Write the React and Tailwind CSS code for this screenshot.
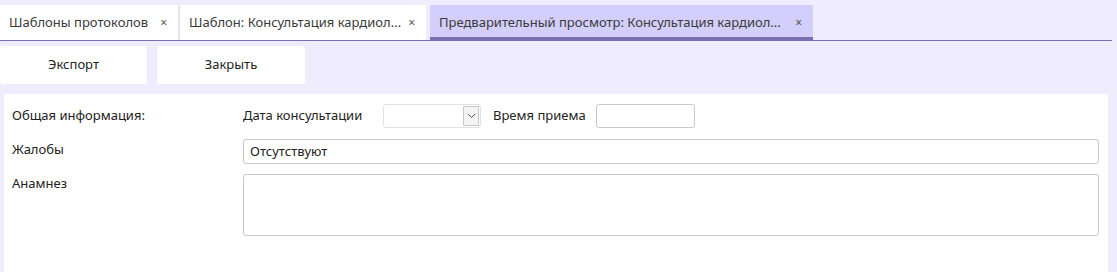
import React from 'react';

const tabs = [
  { title: 'Шаблоны протоколов', width: 'w-[178px]', active: false },
  { title: 'Шаблон: Консультация кардиол...', width: 'w-[246px]', active: false },
  { title: 'Предварительный просмотр: Консультация кардиол...', width: 'w-[383px]', active: true },
];

const Tab = ({ tab }) => (
  <div
    className={`${tab.width} h-[35px] flex items-center justify-between pl-[9px] pr-[11px] ${
      tab.active ? 'bg-[#d3cefb] border-b-[3px] border-[#7a6fb0] pt-[3px]' : 'bg-white'
    }`}
  >
    <span className="text-[13px] text-[#3a3a3a] whitespace-nowrap">{tab.title}</span>
    <span className="text-[12px] text-[#555] leading-none">×</span>
  </div>
);

export default function App() {
  return (
    <div
      className="w-[1117px] h-[272px] bg-[#eeecfd] overflow-hidden"
      style={{ fontFamily: '"Noto Sans", "Open Sans", sans-serif' }}
    >
      {/* Tabs */}
      <div className="pt-[5px] pr-[5px]">
        <div className="flex items-end border-b border-[#7a6fb0]">
          <Tab tab={tabs[0]} />
          <div className="w-[2px] h-[35px] bg-[#e4e4ea]" />
          <Tab tab={tabs[1]} />
          <div className="w-[4px]" />
          <Tab tab={tabs[2]} />
        </div>
      </div>

      {/* Toolbar */}
      <div className="flex gap-[10px] mt-[5px]">
        <button className="w-[147px] h-[38px] bg-white rounded-[3px] text-[13px] text-[#222]">
          Экспорт
        </button>
        <button className="w-[148px] h-[38px] bg-white rounded-[3px] text-[13px] text-[#222]">
          Закрыть
        </button>
      </div>

      {/* Form */}
      <div className="ml-[4px] mr-[9px] mt-[10px] bg-white rounded-t-[3px] h-[200px] pt-[10px] pl-[8px] pr-[9px] text-[13px] text-[#222]">
        <div className="flex items-center h-[24px]">
          <div className="w-[231px]">Общая информация:</div>
          <div className="w-[140px]">Дата консультации</div>
          <div className="w-[98px] h-[24px] border border-[#e2e2e2] rounded-[3px] flex justify-end items-center pr-[1px]">
            <div className="w-[16px] h-[20px] border border-[#c8c8c8] bg-[#f4f4f4] flex items-center justify-center">
              <svg width="9" height="6" viewBox="0 0 9 6">
                <path d="M1 1 L4.5 4.5 L8 1" fill="none" stroke="#555" strokeWidth="1" />
              </svg>
            </div>
          </div>
          <div className="ml-[12px] w-[103px]">Время приема</div>
          <div className="w-[99px] h-[24px] border border-[#c8c8c8] rounded-[3px]" />
        </div>

        <div className="flex items-start mt-[11px]">
          <div className="w-[231px] pt-[1px]">Жалобы</div>
          <div className="flex-1 h-[25px] border border-[#c8c8c8] rounded-[3px] flex items-center px-[6px]">
            Отсутствуют
          </div>
        </div>

        <div className="flex items-start mt-[10px]">
          <div className="w-[231px] leading-[18px]">Анамнез</div>
          <div className="flex-1 h-[62px] border border-[#c8c8c8] rounded-[3px]" />
        </div>
      </div>
    </div>
  );
}
